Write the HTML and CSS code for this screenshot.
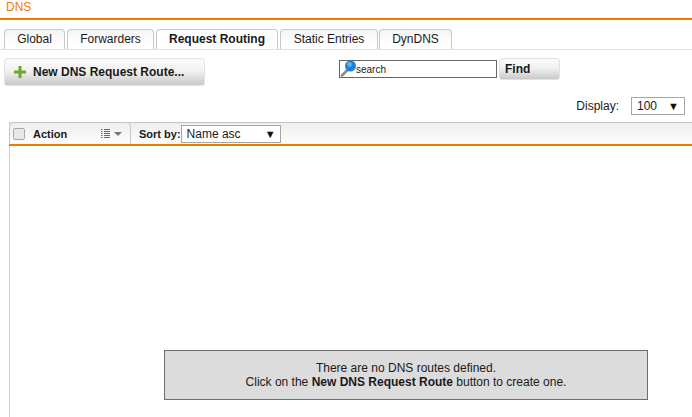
FILE: index.html
```html
<!DOCTYPE html>
<html lang="en">
<head>
    <meta charset="UTF-8">
    <meta name="viewport" content="width=device-width, initial-scale=1.0">
    <title>DNS</title>
    <link rel="stylesheet" href="styles.css">
</head>
<body>
    <div class="page-title">DNS</div>

    <div class="tabs">
        <div class="tab tab-global">Global</div>
        <div class="tab tab-forwarders">Forwarders</div>
        <div class="tab tab-routing active">Request Routing</div>
        <div class="tab tab-static">Static Entries</div>
        <div class="tab tab-dyndns">DynDNS</div>
    </div>

    <div class="toolbar">
        <button class="btn btn-new">
            <svg class="plus" width="14" height="14" viewBox="0 0 14 14">
                <path d="M5.500 1h3v4.500H13v3H8.500V13h-3V8.500H1v-3h4.500z" fill="#6aa82f"/>
            </svg>
            New DNS Request Route...
        </button>
        <div class="search">
            <div class="search-box">
                <svg class="lens" width="17" height="17" viewBox="0 0 17 17">
                    <path d="M7 10.500L2 15.500" stroke="#8a8a8a" stroke-width="2.600" stroke-linecap="round"/>
                    <circle cx="10.500" cy="6" r="5.500" fill="#1f83d6"/>
                    <circle cx="9.500" cy="4.500" r="2.400" fill="#5cb2ee"/>
                </svg>
                <span>search</span>
            </div>
            <button class="btn btn-find">Find</button>
        </div>
    </div>

    <div class="display-row">
        <span class="display-label">Display:</span>
        <div class="select select-display">100<span class="arrow">▼</span></div>
    </div>

    <div class="list">
        <div class="list-head">
            <div class="action-col">
                <span class="check"></span>
                <span class="action-label">Action</span>
                <svg class="list-icon" width="9" height="9" viewBox="0 0 9 9">
                    <path d="M0 .5h1.500M3 .5h6M0 2.500h1.500M3 2.500h6M0 4.500h1.500M3 4.500h6M0 6.500h1.500M3 6.500h6M0 8.500h1.500M3 8.500h6" stroke="#666" stroke-width="1"/>
                </svg>
                <span class="caret"></span>
            </div>
            <div class="sort-col">
                <span class="sort-label">Sort by:</span>
                <div class="select select-sort">Name asc<span class="arrow">▼</span></div>
            </div>
        </div>
        <div class="list-body">
            <div class="notice">
                There are no DNS routes defined.<br>
                Click on the <b>New DNS Request Route</b> button to create one.
            </div>
        </div>
    </div>
</body>
</html>
```

FILE: styles.css
```css
html, body {
    height: 417px;
    overflow: hidden;
}
body {
    margin: 0;
    background: #fff;
    font-family: "Liberation Sans", Arial, sans-serif;
    font-size: 12px;
    color: #1a1a1a;
}
.page-title {
    height: 18px;
    padding-left: 6px;
    border-bottom: 2px solid #ec7d00;
    color: #ec7d00;
    line-height: 14px;
}

.tabs {
    display: flex;
    height: 20px;
    margin-top: 9px;
    padding-left: 4px;
    border-bottom: 1px solid #e3e3e3;
}
.tab {
    box-sizing: border-box;
    height: 20px;
    margin-right: 2px;
    border: 1px solid #c8c8c8;
    border-bottom: none;
    border-radius: 4px 4px 0 0;
    background: linear-gradient(#f4f4f4, #fff 70%);
    text-align: center;
    line-height: 18px;
}
.tab.active {
    background: #fff;
    font-weight: bold;
}
.tab-global { width: 61px; }
.tab-forwarders { width: 87px; }
.tab-routing { width: 122px; }
.tab-static { width: 98px; margin-right: 1px; }
.tab-dyndns { width: 73px; }

.toolbar {
    display: flex;
    height: 28px;
    margin-top: 8px;
    padding-left: 4px;
}
.btn {
    box-sizing: border-box;
    border: 1px solid #e2e2e2;
    border-radius: 3px;
    background: linear-gradient(#fafafa, #f2f2f2 45%, #c9c9c9);
    font-family: inherit;
    font-size: 12px;
    font-weight: bold;
    color: #1a1a1a;
    padding: 0;
}
.btn-new {
    display: flex;
    align-items: center;
    width: 201px;
    height: 28px;
    padding-left: 8px;
}
.plus {
    margin-right: 6px;
}
.search {
    display: flex;
    margin-left: 134px;
    height: 22px;
}
.search-box {
    box-sizing: border-box;
    display: flex;
    align-items: center;
    width: 158px;
    height: 18px;
    margin-top: 2px;
    border: 1px solid #666;
    font-size: 10px;
}
.lens {
    flex: none;
    margin: -1px -1px 0 0;
}
.search-box span {
    margin-top: 1px;
}
.btn-find {
    width: 61px;
    height: 22px;
    margin-left: 2px;
    padding-left: 5px;
    text-align: left;
}

.display-row {
    display: flex;
    justify-content: flex-end;
    align-items: center;
    height: 18px;
    margin-top: 11px;
    padding-right: 7px;
}
.display-label {
    margin-right: 12px;
}
.select {
    box-sizing: border-box;
    display: flex;
    justify-content: space-between;
    align-items: center;
    height: 18px;
    border: 1px solid #a6a6a6;
    padding: 0 5px;
    background: #fff;
}
.select-display {
    width: 54px;
}
.select-sort {
    width: 100px;
    padding-right: 4px;
}
.arrow {
    font-size: 11px;
    color: #111;
}

.list {
    margin: 7px 0 0 9px;
    border-left: 1px solid #d0d0d0;
}
.list-head {
    display: flex;
    box-sizing: border-box;
    height: 24px;
    margin-left: -1px;
    border-top: 1px solid #c4c4c4;
    border-bottom: 2px solid #ec7d00;
    border-top-left-radius: 4px;
    background: linear-gradient(#eeeeee, #fdfdfd);
}
.action-col {
    box-sizing: border-box;
    display: flex;
    align-items: center;
    width: 122px;
    border-left: 1px solid #c4c4c4;
    border-right: 1px solid #c4c4c4;
    border-top-left-radius: 4px;
    border-top-right-radius: 4px;
    font-weight: bold;
    font-size: 11px;
}
.check {
    box-sizing: border-box;
    width: 12px;
    height: 12px;
    margin-left: 3px;
    border: 1px solid #a8a8a8;
    border-radius: 2px;
    background: #e8e8e8;
}
.action-label {
    margin-left: 8px;
    width: 68px;
}
.caret {
    margin-left: 4px;
    border-left: 4px solid transparent;
    border-right: 4px solid transparent;
    border-top: 4px solid #777;
}
.sort-col {
    display: flex;
    align-items: center;
    padding-left: 8px;
    font-size: 11px;
}
.sort-label {
    font-weight: bold;
}
.select-sort {
    font-size: 12px;
}

.list-body {
    display: flex;
    align-items: flex-end;
    height: 271px;
    padding: 0 44px 17px 154px;
    box-sizing: border-box;
}
.notice {
    box-sizing: border-box;
    width: 484px;
    height: 50px;
    padding-top: 10px;
    border: 1px solid #6e6e6e;
    background: #dcdcdc;
    text-align: center;
    line-height: 14px;
}
```
